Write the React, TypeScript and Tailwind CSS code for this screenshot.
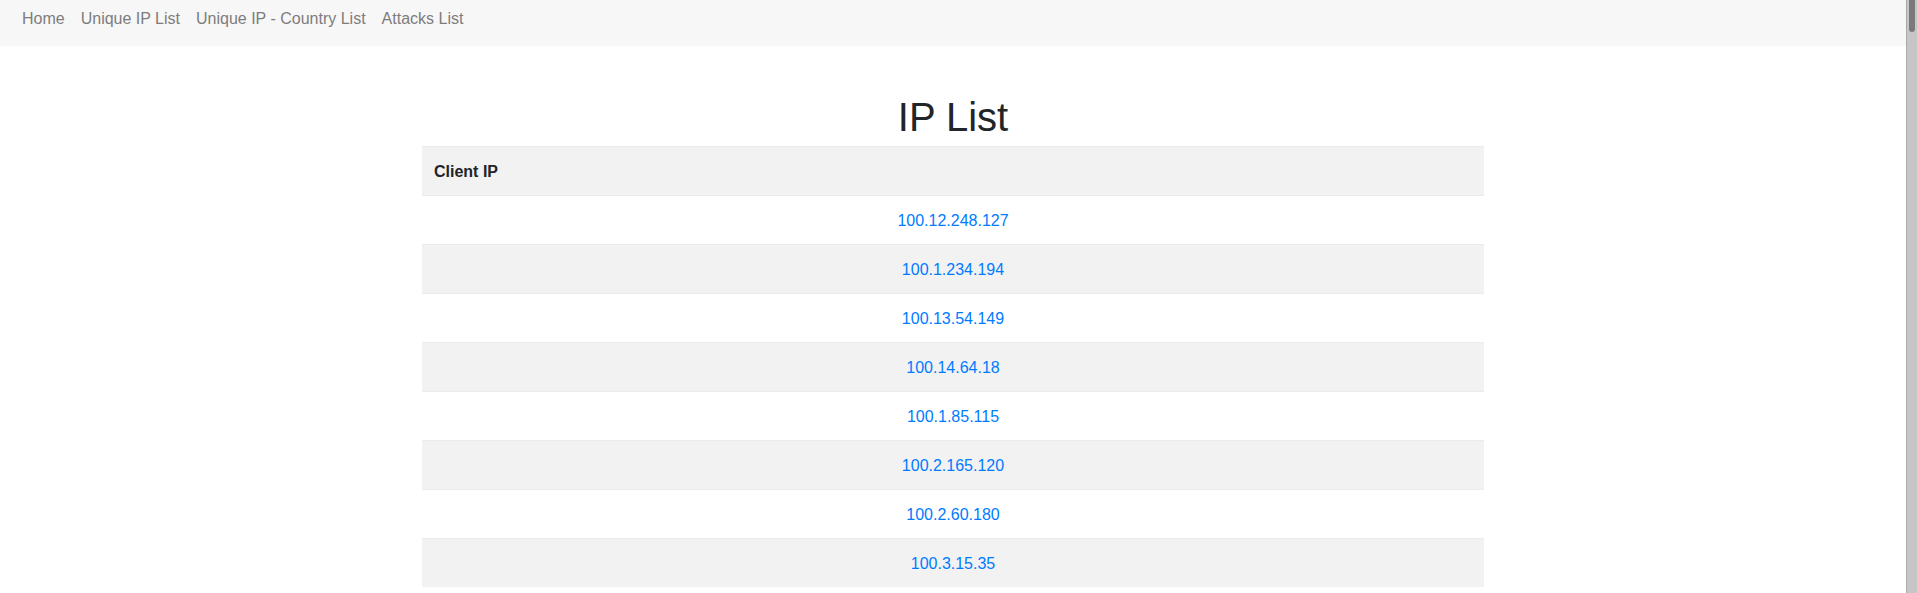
import React from "react";

const navLinks = ["Home", "Unique IP List", "Unique IP - Country List", "Attacks List"];

const ips = [
  "100.12.248.127",
  "100.1.234.194",
  "100.13.54.149",
  "100.14.64.18",
  "100.1.85.115",
  "100.2.165.120",
  "100.2.60.180",
  "100.3.15.35",
];

export default function App() {
  return (
    <div className="flex h-screen overflow-hidden bg-white text-[#212529] font-['Liberation_Sans',Arial,sans-serif] text-base">
      <div className="flex-1 min-w-0">
        {/* NAVBAR */}
        <nav className="h-[46px] bg-[#f7f7f7] pl-[14px] pt-[7px]">
          <ul className="flex">
            {navLinks.map((link) => (
              <li key={link}>
                <a href="#" className="block px-2 leading-6 text-[#7d7d7d]">
                  {link}
                </a>
              </li>
            ))}
          </ul>
        </nav>

        {/* CONTENT */}
        <main className="w-[1062px] mx-auto">
          <h1 className="mt-[47px] mb-[5px] text-center text-[40px] leading-[48px] font-normal">
            IP List
          </h1>

          <table className="w-full border-collapse">
            <thead>
              <tr className="bg-[#f2f2f2]">
                <th className="border-t border-[#ebebeb] px-3 pt-[13px] pb-[11px] text-left font-bold leading-6">
                  Client IP
                </th>
              </tr>
            </thead>
            <tbody>
              {ips.map((ip, i) => (
                <tr key={ip} className={i % 2 === 1 ? "bg-[#f2f2f2]" : "bg-white"}>
                  <td className="border-t border-[#ebebeb] px-3 pt-[13px] pb-[11px] text-center leading-6">
                    <a href="#" className="text-[#007bff]">
                      {ip}
                    </a>
                  </td>
                </tr>
              ))}
            </tbody>
          </table>
        </main>
      </div>

      {/* page scrollbar */}
      <div className="w-[11px] shrink-0 bg-[#c6c6c6] border-l border-[#a9a9a9] px-[2px]">
        <div className="h-[32px] rounded-b-full bg-[#7a7a7a]" />
      </div>
    </div>
  );
}
